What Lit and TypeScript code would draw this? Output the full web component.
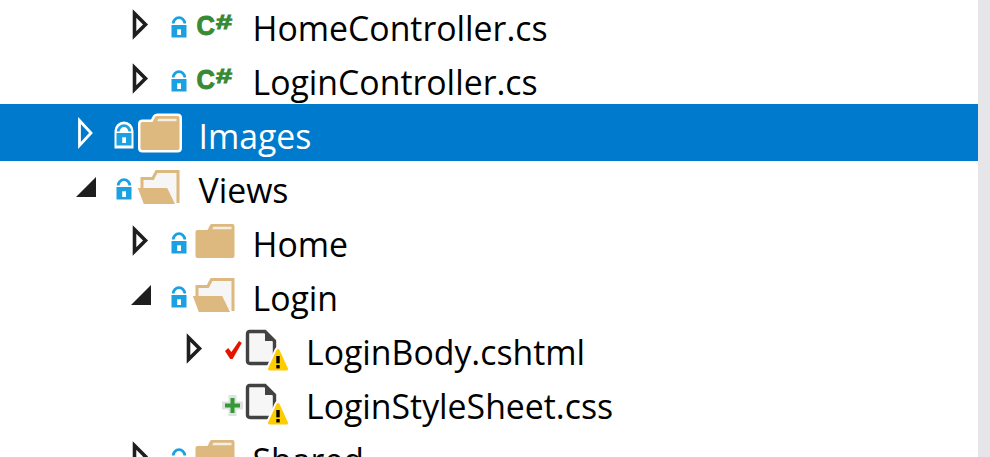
import { LitElement, html, css, svg } from "lit";
import { customElement } from "lit/decorators.js";

type Row = {
  label: string;
  level: 0 | 1 | 2;
  arrow: "closed" | "open" | "none";
  state: "lock" | "check" | "plus";
  kind: "cs" | "folder" | "open" | "file";
  selected?: boolean;
};

const ROWS: Row[] = [
  { label: "HomeController.cs", level: 1, arrow: "closed", state: "lock", kind: "cs" },
  { label: "LoginController.cs", level: 1, arrow: "closed", state: "lock", kind: "cs" },
  { label: "Images", level: 0, arrow: "closed", state: "lock", kind: "folder", selected: true },
  { label: "Views", level: 0, arrow: "open", state: "lock", kind: "open" },
  { label: "Home", level: 1, arrow: "closed", state: "lock", kind: "folder" },
  { label: "Login", level: 1, arrow: "open", state: "lock", kind: "open" },
  { label: "LoginBody.cshtml", level: 2, arrow: "closed", state: "check", kind: "file" },
  { label: "LoginStyleSheet.css", level: 2, arrow: "none", state: "plus", kind: "file" },
  { label: "Shared", level: 1, arrow: "closed", state: "lock", kind: "folder" },
];

const FOLDER =
  "M2.5 14 Q2.5 12 4.5 12 H14.5 L17 7.2 Q17.6 6 19 6 H39.5 Q41.5 6 41.5 8 V38 Q41.5 40 39.5 40 H4.5 Q2.5 40 2.5 38 Z";

function arrowIcon(r: Row) {
  if (r.arrow === "none") return "";
  if (r.arrow === "open") return svg`<path class="a-fill" d="M0 33 L20 13 V33 Z"/>`;
  return r.selected
    ? svg`<path class="a-line sel" d="M3.5 10.5 L15 23 L3.5 35.5 Z"/>`
    : svg`<path class="a-line" d="M3.5 11.5 L14.5 22.5 L3.5 33.5 Z"/>`;
}

function stateIcon(r: Row) {
  if (r.state === "check")
    return svg`<path class="red" d="M6 25 L9.2 22 L12.4 26 L20 15 L22.8 17 L13.6 33 L11.2 33 Z"/>`;
  if (r.state === "plus")
    return svg`
      <path class="halo-plus" d="M9.5 15 H17.5 V21.5 H24 V29.5 H17.5 V36 H9.5 V29.5 H3 V21.5 H9.5 Z"/>
      <path class="green-line" d="M13.5 18 V33 M6 25.5 H21"/>`;
  const lock = svg`
    <path class="shackle" d="M8.2 21.5 A5.8 5.8 0 0 1 19.8 21.5"/>
    <rect class="lock-body" x="6.5" y="23" width="15" height="12.5"/>
    <rect class="key" x="12.2" y="27.3" width="3.8" height="5.7"/>`;
  return r.selected
    ? svg`<path class="lock-halo" d="M5.5 22 V21 A8.5 8.5 0 0 1 22.5 21 V37.5 H5.5 Z"/>${lock}`
    : lock;
}

function kindIcon(r: Row) {
  switch (r.kind) {
    case "cs":
      return svg`
        <text class="cs" transform="translate(3.5 33) scale(0.98 1.08)">C</text>
        <text class="cs hash" transform="translate(23 26.5) scale(1.45 1)">#</text>`;
    case "folder":
      return svg`
        ${r.selected ? svg`<path class="folder-halo" d=${FOLDER}/>` : ""}
        <path class="tan" d=${FOLDER}/>
        <path class="strip" d="M20.5 8.7 H38.5 V11.3 H19.2 Z"/>`;
    case "open":
      return svg`
        <path class="open-back" d="M4 26 V14.5 H14.8 L18.5 7.5 H40 V39"/>
        <path class="tan" d="M-0.2 24 H29.2 L37 40 H5.8 Z"/>`;
    default:
      return svg`
        <path class="page" d="M2.7 5.5 H18 L27.5 15 V35 Q27.5 37.5 25 37.5 H3 Q0.5 37.5 0.5 35 V8 Q0.5 5.5 2.7 5.5 Z"/>
        <path class="fold" d="M18 4 L29 15 H18 Z"/>
        <path class="warn-halo" d="M31 24.5 L22.5 43 H39.5 Z"/>
        <path class="warn" d="M31 24.5 L22.5 43 H39.5 Z"/>
        <rect class="warn-mark" x="29.3" y="30" width="3.4" height="7.3"/>
        <rect class="warn-mark" x="29.3" y="39" width="3.4" height="3.4"/>`;
  }
}

@customElement("app-root")
export class AppRoot extends LitElement {
  static styles = css`
    :host { display: block; width: 990px; height: 457px; overflow: hidden; background: #fff; }
    .frame { display: flex; height: 457px; overflow: hidden; }
    .tree { flex: 0 0 978px; padding-top: 2px; }
    .bar { flex: 0 0 12px; background: #e6e6ea; }
    .row {
      display: flex; align-items: flex-start; box-sizing: border-box; height: 54px;
      font-family: "Open Sans", sans-serif; font-size: 33.8px; color: #000;
    }
    .l0 { padding-left: 76px; --label-gap: 12.5px; }
    .l1 { padding-left: 130.5px; --label-gap: 12px; }
    .l2 { padding-left: 185px; --label-gap: 11px; }
    .selected {
      background: #007acc; color: #fff;
      margin-top: -6px; padding-top: 6px; height: 57px; margin-bottom: 3px;
    }
    svg { display: block; flex: none; overflow: visible; height: 54px; }
    .s-arrow { width: 20px; margin-right: 14px; }
    .s-state { width: 28px; }
    .s-kind { width: 48px; margin-right: var(--label-gap); }
    .label { line-height: 52px; white-space: nowrap; }

    .a-fill { fill: #1e1e1e; }
    .a-line { fill: none; stroke: #1e1e1e; stroke-width: 3.6; }
    .a-line.sel { stroke: #fff; stroke-width: 2.8; }
    .shackle { fill: none; stroke: #1ba1e2; stroke-width: 2.8; }
    .lock-body { fill: #1ba1e2; }
    .key { fill: #fff; }
    .lock-halo { fill: #fff; stroke: #fff; stroke-width: 2; }
    .red { fill: #e51400; }
    .halo-plus { fill: #dfe3e0; }
    .green-line { fill: none; stroke: #359a35; stroke-width: 4; }
    .cs {
      font-family: "Liberation Sans", sans-serif; font-weight: 700; font-size: 26px;
      fill: #388a34; stroke: #388a34; stroke-width: 0.9;
    }
    .hash { font-size: 20px; stroke-width: 0.9; }
    .tan { fill: #ddb87f; }
    .strip { fill: #f6f0e4; }
    .folder-halo { fill: #fff; stroke: #fff; stroke-width: 5; stroke-linejoin: round; }
    .open-back { fill: #f6f6f6; stroke: #ddb87f; stroke-width: 3; }
    .page { fill: #f6f6f6; stroke: #424242; stroke-width: 3.4; }
    .fold { fill: #424242; }
    .warn-halo { fill: #fff; stroke: #fff; stroke-width: 7; stroke-linejoin: round; }
    .warn { fill: #ffcc00; stroke: #ffcc00; stroke-width: 3; stroke-linejoin: round; }
    .warn-mark { fill: #000; }
  `;

  render() {
    return html`<div class="frame">
      <div class="tree">
        ${ROWS.map(
          (r) => html`<div class="row l${r.level} ${r.selected ? "selected" : ""}">
            <svg class="s-arrow" viewBox="0 0 20 54">${arrowIcon(r)}</svg>
            <svg class="s-state" viewBox="0 0 28 54">${stateIcon(r)}</svg>
            <svg class="s-kind" viewBox="0 0 48 54">${kindIcon(r)}</svg>
            <span class="label">${r.label}</span>
          </div>`
        )}
      </div>
      <div class="bar"></div>
    </div>`;
  }
}
